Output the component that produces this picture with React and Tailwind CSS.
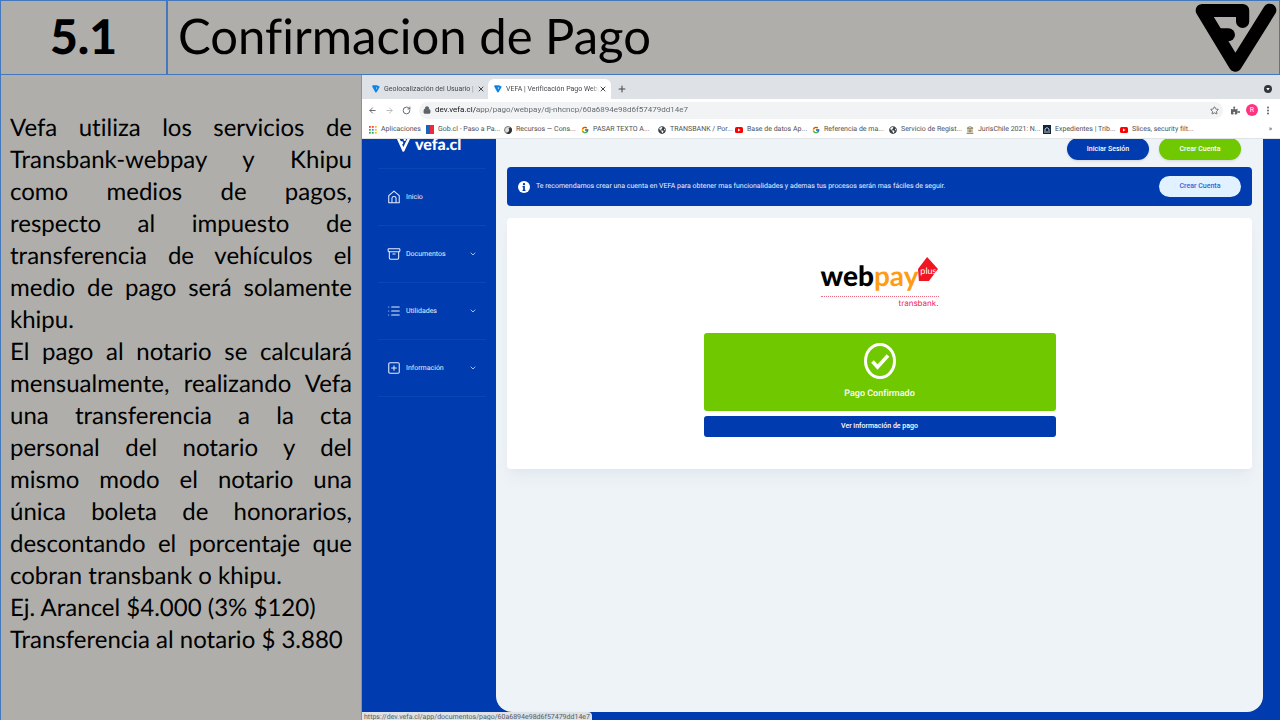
import React from "react";
import { ArrowLeft, ArrowRight, RotateCw, Lock, Star, Plus, X, ChevronDown, Archive, List, SquarePlus, Landmark } from "lucide-react";
import { FaPuzzlePiece, FaInfo, FaGlobeAmericas } from "react-icons/fa";
import { FcGoogle } from "react-icons/fc";

function VefaMark({ className }) {
  return (
    <svg viewBox="75 8 248 216" preserveAspectRatio="none" className={className} fill="none" stroke="currentColor" strokeLinecap="round" strokeLinejoin="round" strokeWidth="40" aria-hidden="true">
      <path d="M219 65V31H97L197 200L301 30" />
      <path d="M146 106H176" />
    </svg>
  );
}

function TabMark({ className }) {
  return (
    <svg viewBox="0 0 16 16" className={className} fill="none" stroke="currentColor" strokeWidth="3.6" strokeLinejoin="round" aria-hidden="true">
      <path d="M10 5V2.5H2.2L8 13L14 2.5M5 6.5H8" />
    </svg>
  );
}

function HomeIcon() {
  return (
    <svg viewBox="0 0 24 24" className="size-3.5" fill="none" stroke="currentColor" strokeWidth="1.8" strokeLinejoin="round" aria-hidden="true">
      <path d="M3 9.5L12 2L21 9.5V22H3ZM8.5 22V14C8.5 10 15.5 10 15.5 14V22" />
    </svg>
  );
}

function AppsIcon() {
  const colors = ["#ea4335", "#ea4335", "#fbbc04", "#34a853", "#4285f4", "#fbbc04", "#34a853", "#34a853", "#fbbc04"];
  return (
    <svg viewBox="0 0 9 9" className="size-2 shrink-0" aria-hidden="true">
      {colors.map((c, i) => (
        <rect key={i} x={(i % 3) * 3.3} y={Math.floor(i / 3) * 3.3} width="2" height="2" fill={c} />
      ))}
    </svg>
  );
}

function YoutubeIcon() {
  return (
    <svg viewBox="0 0 16 14" className="size-2 shrink-0" aria-hidden="true">
      <rect y="1" width="16" height="12" rx="3" fill="#f00" />
      <path d="M6 4L11 7L6 10Z" fill="#fff" />
    </svg>
  );
}

function GobIcon() {
  return (
    <svg viewBox="0 0 8 9" className="h-[9px] w-2 shrink-0" aria-hidden="true">
      <path d="M0 0H4V9H0Z" fill="#1565c0" />
      <path d="M4 0H8V9H4Z" fill="#f0283c" />
    </svg>
  );
}

function CourtIcon() {
  return (
    <svg viewBox="0 0 8 9" className="h-[9px] w-2 shrink-0" aria-hidden="true">
      <path d="M0 0H8V9H0Z" fill="#12263a" />
      <path d="M1 7H7M2 6V4L4 2.5L6 4V6" stroke="#b5c8d4" fill="none" />
    </svg>
  );
}

function RecursosIcon() {
  return (
    <svg viewBox="0 0 16 16" className="size-2 shrink-0" aria-hidden="true">
      <circle cx="8" cy="8" r="7" fill="#ddd" stroke="#555" strokeWidth="1.5" />
      <path d="M13 2.5A7 7 0 0 1 4 14C10 13 12 8 9 5Z" fill="#333" />
    </svg>
  );
}

const globe = <FaGlobeAmericas className="size-2 shrink-0 text-[#3c4043]" />;
const google = <FcGoogle className="size-2 shrink-0" />;

const bookmarks = [
  [<RecursosIcon />, "Recursos — Cons..."],
  [google, "PASAR TEXTO A..."],
  [globe, "TRANSBANK / Por..."],
  [<YoutubeIcon />, "Base de datos Ap..."],
  [google, "Referencia de ma..."],
  [globe, "Servicio de Regist..."],
  [<Landmark className="size-2 shrink-0 text-[#8a7f50]" strokeWidth={3} />, "JurisChile 2021: N..."],
  [<CourtIcon />, "Expedientes | Trib..."],
  [<YoutubeIcon />, "Slices, security filt..."],
];

function Bookmark({ icon, label, className }) {
  return (
    <a href="#" className={`flex shrink-0 items-center gap-1 whitespace-nowrap ${className}`}>
      {icon}
      <span>{label}</span>
    </a>
  );
}

const menu = [
  [<HomeIcon />, "Inicio", false],
  [<Archive className="size-3.5" strokeWidth={1.8} />, "Documentos", true],
  [<List className="size-3.5" strokeWidth={1.8} />, "Utilidades", true],
  [<SquarePlus className="size-3.5" strokeWidth={1.8} />, "Información", true],
];

function TabBar() {
  return (
    <div className="flex h-6 items-end bg-[#dee1e6] pr-2 text-[7px] text-[#45494d]">
      <div className="flex h-5 w-[126px] items-center gap-1 pl-2.5">
        <TabMark className="size-2 shrink-0 text-[#0b84e8]" />
        <button className="w-[93px] shrink-0 overflow-hidden whitespace-nowrap text-left [mask-image:linear-gradient(to_right,black_92%,transparent)]">Geolocalización del Usuario | V</button>
        <button aria-label="Cerrar pestaña" className="-ml-1"><X className="size-2" strokeWidth={3} /></button>
      </div>
      <div className="flex h-5 w-[123px] items-center gap-1 rounded-t-md bg-white pl-1.5">
        <TabMark className="size-2 shrink-0 text-[#0b84e8]" />
        <button className="w-[93px] shrink-0 overflow-hidden whitespace-nowrap text-left [mask-image:linear-gradient(to_right,black_92%,transparent)]">VEFA | Verificación Pago Webp</button>
        <button aria-label="Cerrar pestaña" className="-ml-1"><X className="size-2" strokeWidth={3} /></button>
      </div>
      <button aria-label="Nueva pestaña" className="flex h-5 items-center pl-1.5"><Plus className="size-2.5" strokeWidth={2.5} /></button>
      <button aria-label="Buscar pestañas" className="ml-auto flex h-5 items-center">
        <svg viewBox="0 0 16 16" className="size-2" aria-hidden="true"><circle cx="8" cy="8" r="8" fill="#30363b" /><path d="M4.5 6H11.5L8 11Z" fill="#fff" /></svg>
      </button>
    </div>
  );
}

function AddressBar() {
  return (
    <div className="flex h-[22px] items-center gap-2 bg-white pl-1.5 pr-2.5 text-[#5f6368]">
      <button aria-label="Atrás"><ArrowLeft className="size-[9px]" strokeWidth={2.5} /></button>
      <button aria-label="Adelante" className="text-[#b8bbbe]"><ArrowRight className="size-[9px]" strokeWidth={2.5} /></button>
      <button aria-label="Recargar"><RotateCw className="size-[9px]" strokeWidth={2.5} /></button>
      <div className="flex h-[17px] flex-1 items-center gap-1 rounded-full bg-[#f1f3f4] px-1">
        <Lock className="size-2 shrink-0" fill="currentColor" strokeWidth={2.5} />
        <input
          aria-label="Dirección"
          defaultValue="dev.vefa.cl/app/pago/webpay/dj-nhcncp/60a6894e98d6f57479dd14e7"
          className="h-4 min-w-0 flex-1 bg-[linear-gradient(to_right,#101214_42px,#5f6368_42px)] bg-clip-text text-[8px] leading-4 text-transparent outline-none"
        />
        <button aria-label="Añadir a favoritos"><Star className="size-[9px]" strokeWidth={2.4} /></button>
      </div>
      <div className="flex items-center gap-1.5">
        <button aria-label="Extensiones"><FaPuzzlePiece className="size-[9px]" /></button>
        <button aria-label="Perfil" className="size-3 rounded-full bg-[#ff3380] text-[7px] leading-3 text-white">R</button>
      </div>
      <button aria-label="Menú">
        <svg viewBox="0 0 4 12" className="h-[9px] w-1" fill="currentColor" aria-hidden="true"><circle cx="2" cy="2" r="1.3" /><circle cx="2" cy="6" r="1.3" /><circle cx="2" cy="10" r="1.3" /></svg>
      </button>
    </div>
  );
}

function WebpayLogo() {
  return (
    <div className="w-[118px]">
      <div className="flex h-[39px] items-start font-[Lato,sans-serif] text-[28px] font-black leading-9">
        <span className="text-black">web</span>
        <span className="font-bold text-[#ff9c14]">pay</span>
        <div className="relative h-6 w-5 shrink-0">
          <svg viewBox="0 0 22 24" preserveAspectRatio="none" className="h-6 w-5" aria-hidden="true"><path d="M0 12L10 0L22 12L12 24H1Z" fill="#f01522" /></svg>
          <span className="absolute inset-x-0 top-2 text-center text-[9px] font-normal leading-3 text-white">plus</span>
        </div>
      </div>
      <div className="border-t border-dotted border-[#f06a80]" />
      <div className="text-right font-[Inter,sans-serif] text-[8px] leading-3 text-[#f0205a]">transbank.</div>
    </div>
  );
}

function VefaPage() {
  return (
    <div className="relative flex flex-1 overflow-hidden bg-[#003cb0]">
      <nav className="w-[134px] shrink-0 pl-4 pr-2.5 text-[7px] text-[#e6eefc]">
        <a href="#" className="-mt-1 flex h-[34px] items-start gap-1 border-b border-white/5 pl-[18px] font-[Lato,sans-serif] text-[16px] font-black leading-5 text-white">
          <VefaMark className="h-[17px] w-[15px]" />
          <span>vefa.cl</span>
        </a>
        <ul>
          {menu.map(([icon, label, sub]) => (
            <li key={label} className="border-b border-white/5">
              <a href="#" className="flex h-14 items-center gap-[5px] px-[9px]">
                {icon}
                <span>{label}</span>
                {sub && <ChevronDown className="ml-auto size-2" strokeWidth={2.2} />}
              </a>
            </li>
          ))}
        </ul>
      </nav>
      <main className="mb-2 mr-[17px] flex-1 rounded-b-2xl bg-[#eef3f7] px-[11px]">
        <div className="flex justify-end gap-2.5 pr-[11px] text-[7px] font-medium text-white">
          <button className="-mt-px h-[22px] w-[82px] rounded-full bg-[#003cb0] shadow">Iniciar Sesión</button>
          <button className="-mt-px h-[22px] w-[82px] rounded-full bg-[#70c800] shadow">Crear Cuenta</button>
        </div>
        <div className="mt-[7px] flex h-[39px] items-center gap-1.5 rounded bg-[#003cb0] px-[11px] text-[7px] text-[#eaf1ff]">
          <span className="flex size-3 items-center justify-center rounded-full bg-white text-[#003cb0]"><FaInfo className="size-2" /></span>
          <p>Te recomendamos crear una cuenta en VEFA para obtener mas funcionalidades y ademas tus procesos serán mas fáciles de seguir.</p>
          <button className="ml-auto h-[21px] w-[82px] rounded-full bg-[#e2f1ff] font-medium text-[#2866e0]">Crear Cuenta</button>
        </div>
        <section className="mt-3 flex flex-col items-center rounded bg-white pb-8 pt-[39px] shadow-lg shadow-slate-300/30">
          <WebpayLogo />
          <div className="mt-6 flex h-[78px] w-[352px] flex-col items-center rounded-[3px] bg-[#70c800] pt-2.5 text-[9px] font-medium text-white">
            <svg viewBox="0 0 32 36" className="h-9 w-8" fill="none" stroke="currentColor" aria-hidden="true">
              <ellipse cx="16" cy="18" rx="14.5" ry="16.5" strokeWidth="3" />
              <path d="M8.5 18.5L13.5 24L24 12.5" strokeWidth="3.6" />
            </svg>
            <p className="pt-2 leading-[15px]">Pago Confirmado</p>
          </div>
          <button className="mt-[5px] h-[21px] w-[352px] rounded-[3px] bg-[#003cb0] text-[7px] font-medium text-white">Ver información de pago</button>
        </section>
      </main>
      <div className="absolute bottom-0 left-0 h-2 overflow-hidden rounded-tr-sm bg-[#dee1e6] px-0.5 text-[7px] leading-[10px] text-[#55595e] shadow">
        https://dev.vefa.cl/app/documentos/pago/60a6894e98d6f57479dd14e7
      </div>
    </div>
  );
}

export default function App() {
  return (
    <div className="flex min-h-screen flex-col bg-[#afaeaa] text-black [font-variant-ligatures:none] [text-rendering:geometricPrecision]">
      <header className="flex h-[75px] shrink-0 border border-[#4478bd] font-[Lato,sans-serif]">
        <div className="flex w-[167px] shrink-0 items-center justify-center border-r-2 border-[#4478bd] pb-0.5 text-[48px] font-black leading-none">5.1</div>
        <h1 className="flex flex-1 items-center pb-0.5 pl-2.5 text-[49px] leading-none">Confirmacion de Pago</h1>
        <VefaMark className="mr-0.5 mt-0.5 h-[70px] w-[82px]" />
      </header>
      <div className="flex flex-1">
        <aside className="w-[361px] shrink-0 border-l border-[#4478bd] pl-[9px] pr-[9px] pt-[37px] text-justify font-[Lato,sans-serif] text-[24px] leading-8">
          <p>Vefa utiliza los servicios de Transbank-webpay y Khipu como medios de pagos, respecto al impuesto de transferencia de vehículos el medio de pago será solamente khipu.</p>
          <p>El pago al notario se calculará mensualmente, realizando Vefa una transferencia a la cta personal del notario y del mismo{"\u00a0"}modo el notario una única{"\u00a0"}boleta de honorarios, descontando el porcentaje que cobran transbank o khipu.</p>
          <p>Ej. Arancel $4.000 (3% $120)</p>
          <p>Transferencia al notario $ 3.880</p>
        </aside>
        <div className="flex min-w-0 flex-1 flex-col border-l border-[#7595c5] font-[Roboto,sans-serif]">
          <TabBar />
          <AddressBar />
          <div className="flex h-[18px] items-center overflow-hidden border-b border-[#e0e3e6] bg-white pl-[7px] pr-2 text-[7px] text-[#4d5155]">
            <Bookmark icon={<AppsIcon />} label="Aplicaciones" className="w-[57px]" />
            <Bookmark icon={<GobIcon />} label="Gob.cl - Paso a Pa..." className="w-[78px]" />
            {bookmarks.map(([icon, label]) => (
              <Bookmark key={label} icon={icon} label={label} className="w-[77px]" />
            ))}
            <button aria-label="Más favoritos" className="ml-auto">»</button>
          </div>
          <VefaPage />
        </div>
      </div>
    </div>
  );
}
